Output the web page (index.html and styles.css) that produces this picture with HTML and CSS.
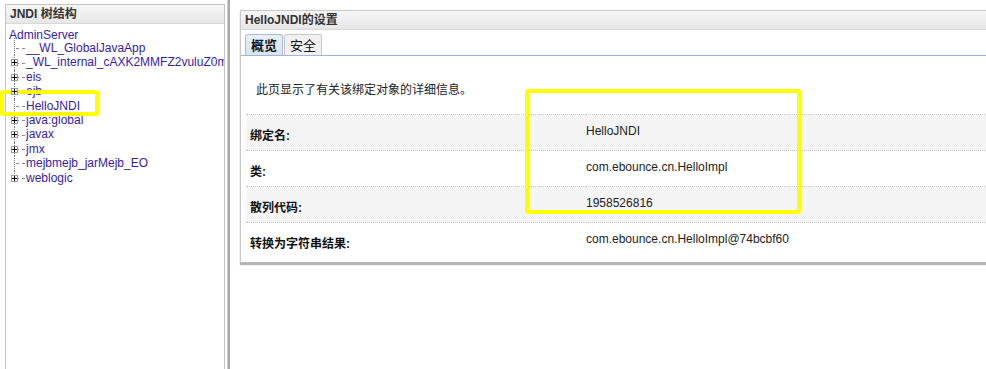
FILE: index.html
```html
<!DOCTYPE html>
<html lang="zh-CN">
<head>
<meta charset="UTF-8">
<title>HelloJNDI的设置</title>
<link rel="stylesheet" href="styles.css">
</head>
<body>
    <div class="page">
        <!-- 左侧 JNDI 树 -->
        <div class="tree-box">
            <div class="box-head">JNDI 树结构</div>
            <div class="tree">
                <div class="root">AdminServer</div>
                <ul class="branch">
                    <li>__WL_GlobalJavaApp</li>
                    <li class="more"><span class="plus"></span>_WL_internal_cAXK2MMFZ2vuluZ0m</li>
                    <li class="more"><span class="plus"></span>eis</li>
                    <li class="more"><span class="plus"></span>ejb</li>
                    <li>HelloJNDI</li>
                    <li class="more"><span class="plus"></span>java:global</li>
                    <li class="more"><span class="plus"></span>javax</li>
                    <li class="more"><span class="plus"></span>jmx</li>
                    <li>mejbmejb_jarMejb_EO</li>
                    <li class="more"><span class="plus"></span>weblogic</li>
                </ul>
            </div>
        </div>
        <div class="splitter"></div>

        <!-- 右侧 详细信息 -->
        <div class="detail">
            <div class="box-head">HelloJNDI的设置</div>
            <div class="tabs">
                <span class="tab on">概览</span>
                <span class="tab">安全</span>
            </div>
            <p class="intro">此页显示了有关该绑定对象的详细信息。</p>
            <table class="props">
                <tr class="odd"><td class="label">绑定名:</td><td class="value">HelloJNDI</td></tr>
                <tr><td class="label">类:</td><td class="value">com.ebounce.cn.HelloImpl</td></tr>
                <tr class="odd"><td class="label">散列代码:</td><td class="value">1958526816</td></tr>
                <tr><td class="label">转换为字符串结果:</td><td class="value">com.ebounce.cn.HelloImpl@74bcbf60</td></tr>
            </table>
        </div>
    </div>

    <!-- 标注用的黄色框 -->
    <div class="mark mark-tree"></div>
    <div class="mark mark-table"></div>
</body>
</html>
```

FILE: styles.css
```css
body{
    margin: 0;
    background: #ffffff;
    font-family: "Liberation Sans", "Noto Sans CJK SC", sans-serif;
    font-size: 12px;
    overflow: hidden;
}
.page{
    display: flex;
    align-items: flex-start;
    height: 369px;
}
.box-head{
    height: 18px;
    line-height: 18px;
    padding-left: 4px;
    font-weight: bold;
    color: #333333;
    background: linear-gradient(#f6f6f6, #e5e6e5);
    border-bottom: 1px solid #d8d8d8;
    white-space: nowrap;
}

/* 左侧树 */
.tree-box{
    width: 218px;
    height: 380px;
    margin: 4px 0 0 5px;
    border: 1px solid #c4c4c4;
    overflow: hidden;
}
.tree{
    padding: 4px 0 0 0;
    color: #3a1d9e;
}
.root{
    height: 14px;
    line-height: 14px;
    padding-left: 3px;
    margin-bottom: -1px;
}
.branch{
    list-style: none;
    margin: 0;
    padding: 0;
}
.branch li{
    position: relative;
    height: 14.4px;
    line-height: 14.4px;
    padding-left: 20px;
    white-space: nowrap;
}
.branch li::before{
    content: "";
    position: absolute;
    left: 8px;
    top: 0;
    bottom: 0;
    border-left: 1px dotted #7a7a7a;
}
.branch li:first-child::before{
    top: -3px;
}
.branch li:last-child::before{
    bottom: 50%;
}
.branch li::after{
    content: "";
    position: absolute;
    left: 10px;
    width: 9px;
    top: 50%;
    border-top: 1px dashed #8a8a8a;
}
.plus{
    position: absolute;
    left: 5px;
    top: 4px;
    width: 5px;
    height: 5px;
    border: 1px solid #9a9a9a;
    background:
        linear-gradient(#000, #000) center / 5px 1px no-repeat,
        linear-gradient(#000, #000) center / 1px 5px no-repeat,
        #ffffff;
    z-index: 1;
}
.splitter{
    width: 2px;
    height: 369px;
    margin-left: 2px;
    background: #a9a9a9;
    border-left: 1px solid #d0d0d0;
}

/* 右侧详细信息 */
.detail{
    flex: 1;
    margin: 10px -10px 0 10px;
    border: 1px solid #c8c8c8;
    border-bottom: 1px solid #b8b8b8;
    box-shadow: 0 2px 1px #b4b4b4;
    padding-bottom: 3px;
}
.tabs{
    display: flex;
    gap: 1px;
    padding: 4px 0 0 4px;
    border-bottom: 1px solid #9db5dc;
}
.tab{
    height: 20px;
    line-height: 21px;
    padding: 0 5px;
    border: 1px solid #c6c6c6;
    border-bottom: none;
    border-radius: 3px 3px 0 0;
    background: #f1f1f1;
    color: #111111;
    font-size: 13px;
}
.tab.on{
    background: linear-gradient(#e8f0f8, #d8e4f0);
    border-color: #a8bcd8;
    font-weight: bold;
}
.intro{
    margin: 27px 0 17px 15px;
    line-height: 14px;
    color: #222222;
}
.props{
    width: calc(100% - 5px);
    margin-left: 5px;
    border-collapse: collapse;
}
.props tr{
    height: 36px;
    border-top: 1px dotted #c4c4c4;
}
.props tr.odd{
    background: #f4f4f4;
}
.props td{
    padding: 0;
    vertical-align: middle;
}
.label{
    width: 336px;
    padding-left: 4px !important;
    padding-top: 3px !important;
    font-weight: bold;
    color: #111111;
}
.value{
    padding-bottom: 4px !important;
    color: #222222;
}

/* 黄色标注框 */
.mark{
    position: absolute;
    box-sizing: border-box;
    border: 4px solid #ffff00;
    border-radius: 3px;
}
.mark-tree{
    left: 0;
    top: 90px;
    width: 99px;
    height: 26px;
}
.mark-table{
    left: 525px;
    top: 89px;
    width: 276px;
    height: 125px;
}
```
